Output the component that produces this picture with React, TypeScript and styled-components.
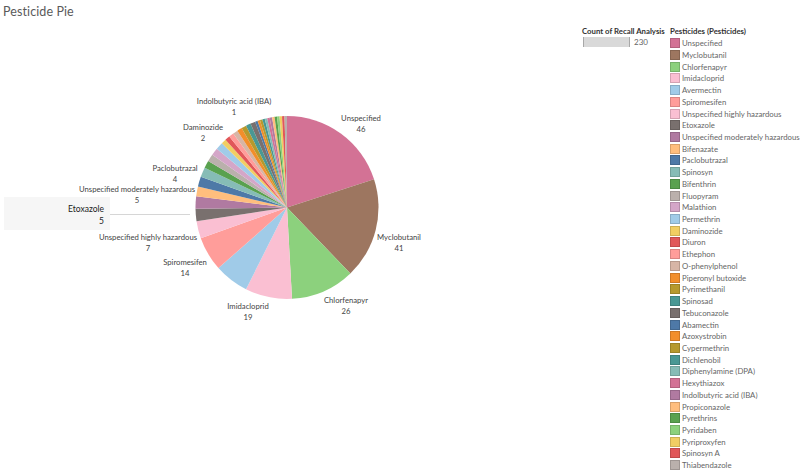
import React from 'react';
import styled, { createGlobalStyle } from 'styled-components';

type Item = { name: string; count: number; color: string };

const items: Item[] = [
  { name: 'Unspecified', count: 46, color: '#D37295' },
  { name: 'Myclobutanil', count: 41, color: '#9D7660' },
  { name: 'Chlorfenapyr', count: 26, color: '#8CD17D' },
  { name: 'Imidacloprid', count: 19, color: '#FABFD2' },
  { name: 'Avermectin', count: 14, color: '#A0CBE8' },
  { name: 'Spiromesifen', count: 14, color: '#FF9D9A' },
  { name: 'Unspecified highly hazardous', count: 7, color: '#FABFD2' },
  { name: 'Etoxazole', count: 5, color: '#79706E' },
  { name: 'Unspecified moderately hazardous', count: 5, color: '#B07AA1' },
  { name: 'Bifenazate', count: 4, color: '#FFBE7D' },
  { name: 'Paclobutrazal', count: 4, color: '#4E79A7' },
  { name: 'Spinosyn', count: 4, color: '#86BCB6' },
  { name: 'Bifenthrin', count: 3, color: '#59A14F' },
  { name: 'Fluopyram', count: 3, color: '#BAB0AC' },
  { name: 'Malathion', count: 3, color: '#D4A6C8' },
  { name: 'Permethrin', count: 3, color: '#A0CBE8' },
  { name: 'Daminozide', count: 2, color: '#F1CE63' },
  { name: 'Diuron', count: 2, color: '#E15759' },
  { name: 'Ethephon', count: 2, color: '#FF9D9A' },
  { name: 'O-phenylphenol', count: 2, color: '#D7B5A6' },
  { name: 'Piperonyl butoxide', count: 2, color: '#F28E2B' },
  { name: 'Pyrimethanil', count: 2, color: '#B6992D' },
  { name: 'Spinosad', count: 2, color: '#499894' },
  { name: 'Tebuconazole', count: 2, color: '#79706E' },
  { name: 'Abamectin', count: 1, color: '#4E79A7' },
  { name: 'Azoxystrobin', count: 1, color: '#F28E2B' },
  { name: 'Cypermethrin', count: 1, color: '#B6992D' },
  { name: 'Dichlenobil', count: 1, color: '#499894' },
  { name: 'Diphenylamine (DPA)', count: 1, color: '#86BCB6' },
  { name: 'Hexythiazox', count: 1, color: '#D37295' },
  { name: 'Indolbutyric acid (IBA)', count: 1, color: '#B07AA1' },
  { name: 'Propiconazole', count: 1, color: '#FFBE7D' },
  { name: 'Pyrethrins', count: 1, color: '#59A14F' },
  { name: 'Pyridaben', count: 1, color: '#8CD17D' },
  { name: 'Pyriproxyfen', count: 1, color: '#F1CE63' },
  { name: 'Spinosyn A', count: 1, color: '#E15759' },
  { name: 'Thiabendazole', count: 1, color: '#BAB0AC' },
];

// label centres, in chart coordinates
const labels = [
  { name: 'Indolbutyric acid (IBA)', value: 1, x: 234, y: 74 },
  { name: 'Daminozide', value: 2, x: 203, y: 100 },
  { name: 'Paclobutrazal', value: 4, x: 175, y: 141 },
  { name: 'Unspecified moderately hazardous', value: 5, x: 137, y: 162 },
  { name: 'Unspecified highly hazardous', value: 7, x: 148, y: 210 },
  { name: 'Spiromesifen', value: 14, x: 185, y: 235 },
  { name: 'Imidacloprid', value: 19, x: 248, y: 279 },
  { name: 'Chlorfenapyr', value: 26, x: 346, y: 273 },
  { name: 'Myclobutanil', value: 41, x: 399, y: 210 },
  { name: 'Unspecified', value: 46, x: 361, y: 91 },
];

const CX = 287;
const CY = 181.5;
const R = 91.5;

const slicePaths = () => {
  const total = items.reduce((s, i) => s + i.count, 0);
  let acc = 0;
  return items.map((it) => {
    const a0 = (acc / total) * Math.PI * 2 - Math.PI / 2;
    acc += it.count;
    const a1 = (acc / total) * Math.PI * 2 - Math.PI / 2;
    const large = a1 - a0 > Math.PI ? 1 : 0;
    const x0 = CX + R * Math.cos(a0);
    const y0 = CY + R * Math.sin(a0);
    const x1 = CX + R * Math.cos(a1);
    const y1 = CY + R * Math.sin(a1);
    return {
      d: `M${CX},${CY} L${x0},${y0} A${R},${R} 0 ${large} 1 ${x1},${y1} Z`,
      color: it.color,
    };
  });
};

const GlobalStyle = createGlobalStyle`
  html, body {
    margin: 0;
    padding: 0;
    background: #ffffff;
  }
  body {
    font-family: 'Lato', 'Open Sans', sans-serif;
    width: 800px;
    height: 471px;
    overflow: hidden;
  }
`;

const Page = styled.div`
  width: 800px;
  height: 471px;
  display: flex;
  flex-direction: column;
`;

const Title = styled.div`
  height: 27px;
  padding: 4px 0 0 3px;
  box-sizing: border-box;
  font-size: 12.5px;
  color: #5a5a5a;
  letter-spacing: 0.1px;
`;

const Main = styled.div`
  flex: 1;
  display: flex;
`;

const Chart = styled.div`
  position: relative;
  width: 582px;
  height: 444px;
  svg {
    display: block;
  }
`;

const Label = styled.div<{ $x: number; $y: number }>`
  position: absolute;
  left: ${(p) => p.$x}px;
  top: ${(p) => p.$y - 4}px;
  transform: translateX(-50%);
  text-align: center;
  white-space: nowrap;
  font-size: 7.7px;
  line-height: 11px;
  color: #444;
`;

const Highlight = styled.div`
  position: absolute;
  left: 4px;
  top: 171px;
  width: 106px;
  height: 33px;
  background: #f6f6f6;
  box-sizing: border-box;
  padding: 6px 6px 0 0;
  text-align: right;
  font-size: 8.5px;
  line-height: 12px;
  color: #222;
`;

const Leader = styled.div`
  position: absolute;
  left: 110px;
  top: 188px;
  width: 80px;
  height: 1px;
  background: #d6d6d6;
`;

const Legends = styled.div`
  display: flex;
  gap: 6px;
`;

const SizeLegend = styled.div`
  width: 82px;
  display: flex;
  flex-direction: column;
  gap: 1px;
`;

const LegendTitle = styled.div`
  font-size: 7.8px;
  font-weight: 700;
  color: #333;
  line-height: 10px;
  white-space: nowrap;
`;

const SizeRow = styled.div`
  display: flex;
  align-items: center;
  gap: 4px;
  padding-left: 1px;
  font-size: 8px;
  color: #666;
`;

const SizeBar = styled.div`
  width: 47px;
  height: 10px;
  background: #d9d9d9;
  border-left: 1px solid #a8a8a8;
  border-right: 1px solid #a8a8a8;
  box-sizing: border-box;
`;

const ColorLegend = styled.div`
  display: flex;
  flex-direction: column;
`;

const ColorList = styled.div`
  display: flex;
  flex-direction: column;
  padding-top: 1px;
`;

const ColorRow = styled.div`
  height: 11.73px;
  display: flex;
  align-items: center;
  gap: 2px;
  font-size: 7.8px;
  color: #666;
  white-space: nowrap;
`;

const Swatch = styled.div<{ $color: string }>`
  width: 10px;
  height: 10px;
  background: ${(p) => p.$color};
  box-shadow: inset 0 0 0 1px rgba(0, 0, 0, 0.15);
  flex-shrink: 0;
`;

const App = () => {
  const slices = slicePaths();
  return (
    <Page>
      <GlobalStyle />
      <Title>Pesticide Pie</Title>
      <Main>
        <Chart>
          <svg width="582" height="444" viewBox="0 0 582 444">
            {slices.map((s, i) => (
              <path key={i} d={s.d} fill={s.color} />
            ))}
          </svg>
          <Leader />
          <Highlight>
            Etoxazole
            <br />5
          </Highlight>
          {labels.map((l) => (
            <Label key={l.name} $x={l.x} $y={l.y}>
              {l.name}
              <br />
              {l.value}
            </Label>
          ))}
        </Chart>
        <Legends>
          <SizeLegend>
            <LegendTitle>Count of Recall Analysis</LegendTitle>
            <SizeRow>
              <SizeBar />
              230
            </SizeRow>
          </SizeLegend>
          <ColorLegend>
            <LegendTitle>Pesticides (Pesticides)</LegendTitle>
            <ColorList>
              {items.map((it) => (
                <ColorRow key={it.name}>
                  <Swatch $color={it.color} />
                  {it.name}
                </ColorRow>
              ))}
            </ColorList>
          </ColorLegend>
        </Legends>
      </Main>
    </Page>
  );
};

export default App;
